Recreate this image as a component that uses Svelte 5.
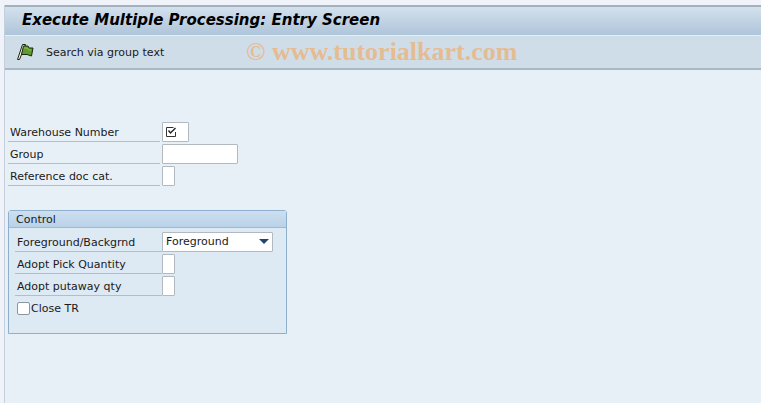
<script>
	const fields = [
		{ label: 'Warehouse Number', size: 'wh', checked: true },
		{ label: 'Group', size: 'group' },
		{ label: 'Reference doc cat.', size: 'one' }
	];
	const controls = [
		{ label: 'Adopt Pick Quantity' },
		{ label: 'Adopt putaway qty' }
	];
</script>

<div class="screen">
	<div class="content">
		<header class="title">Execute Multiple Processing: Entry Screen</header>
		<div class="toolbar">
			<svg class="flag" viewBox="0 0 18 18" width="18" height="18">
				<path d="M1.5 16.5 L6.5 1.5 L9.5 1.5 L3.5 16.5 Z" fill="#f2f4e6" stroke="#1a2210" stroke-width="1" stroke-linejoin="round" />
				<path d="M7.5 3 L12 3 L13 5 L17 5 L15.5 13 L11 11.5 L5.5 11.5 Z" fill="#5e9a2e" stroke="#1d2a12" stroke-width="1" stroke-linejoin="round" />
				<path d="M8 5 L11.5 5 L12.5 7 L15 7" fill="none" stroke="#8fbf55" stroke-width="1" />
			</svg>
			<span class="tool-text">Search via group text</span>
			<span class="mark">© www.tutorialkart.com</span>
		</div>

		<main class="body">
			<div class="fields">
				{#each fields as f}
					<div class="row">
						<span class="label">{f.label}</span>
						<span class="input {f.size}">
							{#if f.checked}
								<svg viewBox="0 0 11 11" width="11" height="11">
									<path d="M7.5 1.5 H0.5 V10.5 H9.5 V6" fill="none" stroke="#333" />
									<path d="M2.5 4.5 L4.5 7 L9.5 2" fill="none" stroke="#222" stroke-width="1.4" />
								</svg>
							{/if}
						</span>
					</div>
				{/each}
			</div>

			<section class="box">
				<div class="box-head">Control</div>
				<div class="box-body">
					<div class="row">
						<span class="label">Foreground/Backgrnd</span>
						<span class="input select">
							Foreground
							<i class="arrow"></i>
						</span>
					</div>
					{#each controls as c}
						<div class="row">
							<span class="label">{c.label}</span>
							<span class="input one"></span>
						</div>
					{/each}
					<div class="check-row">
						<span class="check"></span>
						<span class="check-label">Close TR</span>
					</div>
				</div>
			</section>
		</main>
	</div>
</div>

<style>
	:global(body) {
		margin: 0;
		background: #e8f0f7;
	}

	.screen {
		width: 761px;
		height: 403px;
		box-sizing: border-box;
		padding-top: 5px;
		padding-left: 4px;
		background: #f0f4fa;
		overflow: hidden;
		font-family: "DejaVu Sans", sans-serif;
		font-size: 11px;
		color: #1a1a1a;
	}

	.content {
		height: 100%;
		background: #e8f0f7;
		border-left: 1px solid #c4cfdb;
	}

	.title {
		height: 31px;
		line-height: 27px;
		box-sizing: border-box;
		border-top: 2px solid #a3b1bf;
		padding-left: 17px;
		background: linear-gradient(#d3e1ed, #aec5da);
		border-bottom: 1px solid #e6eef5;
		font-size: 15px;
		font-weight: bold;
		font-style: italic;
		color: #000;
		white-space: nowrap;
	}

	.toolbar {
		height: 34px;
		box-sizing: border-box;
		display: flex;
		align-items: center;
		background: #cfdde9;
		border-bottom: 2px solid #a9b8c6;
		padding: 0 0 0 11px;
		position: relative;
	}

	.tool-text {
		margin-left: 12px;
	}

	.mark {
		position: absolute;
		left: 241px;
		top: 0;
		font-family: "Liberation Serif", serif;
		font-weight: bold;
		font-size: 26px;
		line-height: 32px;
		color: #e5bc92;
		white-space: nowrap;
	}

	.body {
		padding: 52px 0 0 3px;
	}

	.fields {
		width: 240px;
	}

	.row {
		display: flex;
		align-items: flex-start;
		height: 22px;
	}

	.label {
		width: 152px;
		height: 20px;
		line-height: 21px;
		box-sizing: border-box;
		padding-left: 2px;
		margin-right: 2px;
		border-bottom: 1px solid #b5bec8;
		white-space: nowrap;
	}

	.input {
		display: block;
		height: 20px;
		box-sizing: border-box;
		background: #fff;
		border: 1px solid #b3b9c0;
		border-radius: 1px;
	}

	.wh {
		width: 27px;
		padding: 3px 0 0 3px;
	}

	.wh svg {
		display: block;
	}

	.group {
		width: 76px;
	}

	.one {
		width: 13px;
	}

	.box {
		margin-top: 22px;
		width: 279px;
		height: 124px;
		box-sizing: border-box;
		border: 1px solid #8fb0cc;
		border-radius: 3px 3px 0 0;
		background: #dde9f3;
	}

	.box-head {
		height: 16px;
		line-height: 17px;
		padding-left: 7px;
		background: linear-gradient(#cddff0, #b9d2e8);
		border-bottom: 1px solid #9dbad4;
	}

	.box-body {
		padding: 4px 0 0 6px;
	}

	.box-body .label {
		width: 147px;
		padding-left: 2px;
		margin-right: 0;
	}

	.select {
		width: 111px;
		padding-left: 3px;
		line-height: 17px;
		position: relative;
	}

	.arrow {
		position: absolute;
		right: 3px;
		top: 6px;
		border-left: 5px solid transparent;
		border-right: 5px solid transparent;
		border-top: 5px solid #24466e;
	}

	.check-row {
		display: flex;
		align-items: center;
		height: 20px;
		margin-left: 2px;
	}

	.check {
		width: 13px;
		height: 13px;
		box-sizing: border-box;
		background: #fff;
		border: 1px solid #8e979f;
		border-radius: 2px;
	}

	.check-label {
		margin-left: 1px;
	}
</style>
